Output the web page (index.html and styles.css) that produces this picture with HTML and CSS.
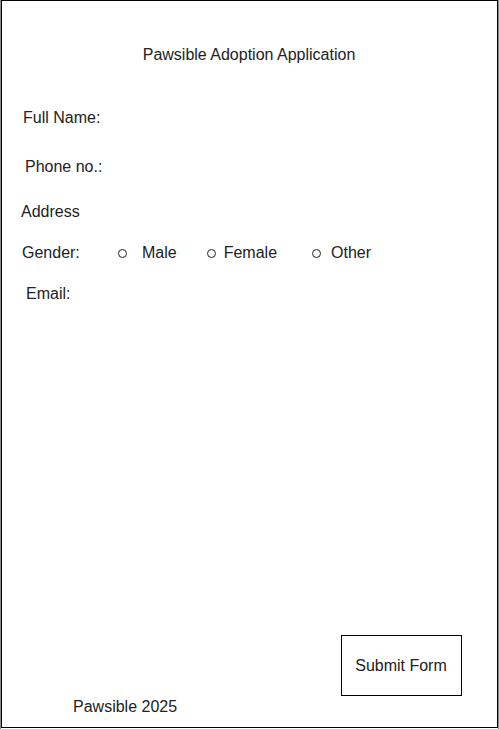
FILE: index.html
```html
<!DOCTYPE html>
<html lang="en">
<head>
<meta charset="utf-8">
<title>Pawsible Adoption Application</title>
<link rel="stylesheet" href="styles.css">
</head>
<body>
<div class="frame">
  <h1 class="title">Pawsible Adoption Application</h1>
  <div class="field field-name">Full Name:</div>
  <div class="field field-phone">Phone no.:</div>
  <div class="field field-address">Address</div>
  <div class="field field-gender">
    <span class="gender-label">Gender:</span>
    <span class="option opt-male"><span class="radio"></span><span>Male</span></span>
    <span class="option opt-female"><span class="radio"></span><span>Female</span></span>
    <span class="option opt-other"><span class="radio"></span><span>Other</span></span>
  </div>
  <div class="field field-email">Email:</div>
  <div class="bottom">
    <div class="submit-row">
      <button class="submit" type="button">Submit Form</button>
    </div>
    <div class="footer">Pawsible 2025</div>
  </div>
</div>
</body>
</html>
```

FILE: styles.css
```css
html, body {
  margin: 0;
  padding: 0;
  background: #ffffff;
}
body {
  width: 499px;
  height: 729px;
  box-sizing: border-box;
  border-left: 1px solid #8a8a8a;
  border-right: 1px solid #8a8a8a;
  font-family: "Liberation Sans", Arial, sans-serif;
  font-size: 16px;
  color: #222222;
}
.frame {
  box-sizing: border-box;
  width: 497px;
  height: 728px;
  border: 1px solid #000000;
  display: flex;
  flex-direction: column;
}
.title {
  margin: 44px 0 0 0;
  font-size: 16px;
  font-weight: normal;
  line-height: 20px;
  text-align: center;
  padding-right: 1px;
}
.field {
  line-height: 20px;
}
.field-name { margin-top: 43px; padding-left: 21px; }
.field-phone { margin-top: 29px; padding-left: 23px; }
.field-address { margin-top: 25px; padding-left: 19px; }
.field-gender {
  margin-top: 21px;
  padding-left: 20px;
  display: flex;
  align-items: center;
}
.field-email { margin-top: 21px; padding-left: 24px; }
.gender-label { width: 96px; }
.option {
  display: flex;
  align-items: center;
}
.radio {
  box-sizing: border-box;
  width: 9px;
  height: 9px;
  border: 1.5px solid #222222;
  border-radius: 50%;
  margin-top: 1px;
}
.opt-male .radio { margin-right: 15px; }
.opt-female { margin-left: 30px; }
.opt-female .radio { margin-right: 8px; }
.opt-other { margin-left: 35px; }
.opt-other .radio { margin-right: 10px; }
.bottom {
  margin-top: auto;
  display: flex;
  flex-direction: column;
}
.submit-row {
  display: flex;
  justify-content: flex-end;
  padding-right: 35px;
}
.submit {
  box-sizing: border-box;
  width: 121px;
  height: 61px;
  border: 1px solid #000000;
  background: #ffffff;
  font-family: "Liberation Sans", Arial, sans-serif;
  font-size: 16px;
  color: #222222;
  padding: 0 1px 0 0;
}
.footer {
  line-height: 20px;
  padding-left: 71px;
  margin: 1px 0 10px 0;
}
```
